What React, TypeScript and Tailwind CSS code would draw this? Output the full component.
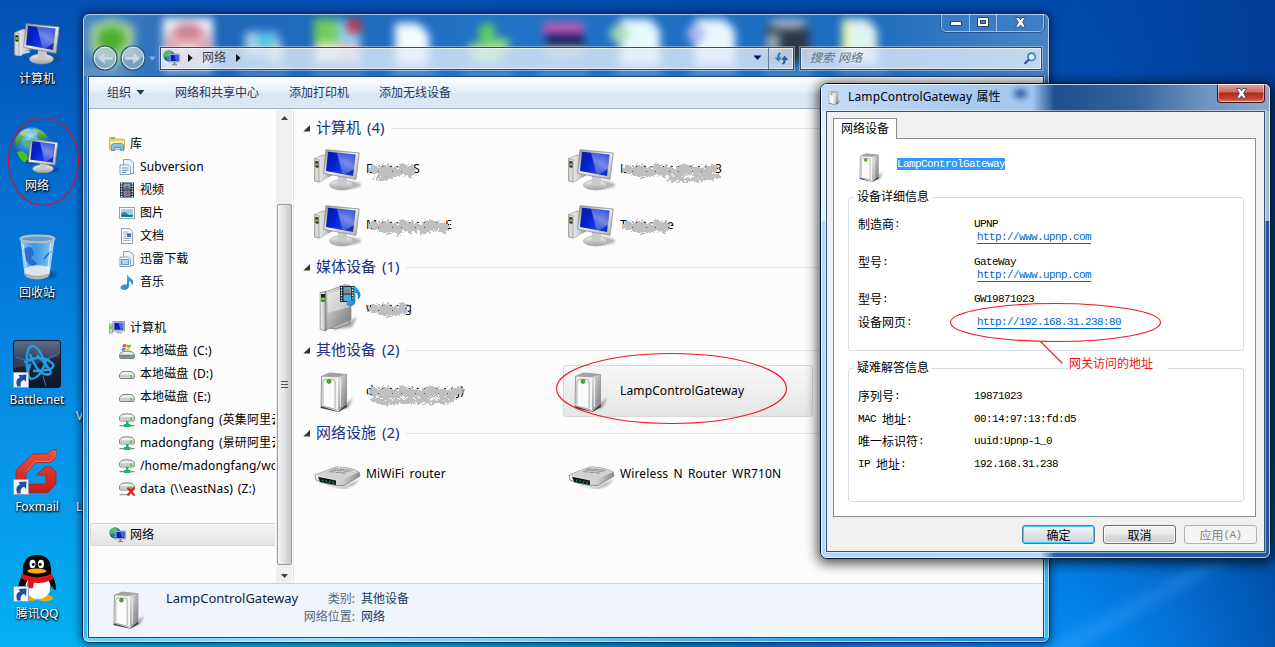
import React from "react";

const UI = "font-['Noto_Sans','Noto_Sans_CJK_SC',sans-serif]";

type IconProps = { className?: string };

/* ---------- shared gradients ---------- */

function Defs() {
  return (
    <svg className="absolute h-0 w-0" aria-hidden="true">
      <defs>
        <linearGradient id="screen" x1="0" y1="0" x2="1" y2="0.5">
          <stop offset="0" stopColor="#0a1c96" />
          <stop offset="0.4" stopColor="#0420d0" />
          <stop offset="0.75" stopColor="#1c3ee0" />
          <stop offset="1" stopColor="#1430bc" />
        </linearGradient>
        <linearGradient id="sheen" x1="0.8" y1="0" x2="0.3" y2="1">
          <stop offset="0" stopColor="#fff" stopOpacity="0.12" />
          <stop offset="0.5" stopColor="#fff" stopOpacity="0.4" />
          <stop offset="1" stopColor="#fff" stopOpacity="0.15" />
        </linearGradient>
        <linearGradient id="bezel" x1="0" y1="0" x2="1" y2="1">
          <stop offset="0" stopColor="#8d9193" />
          <stop offset="0.5" stopColor="#f2f2f0" />
          <stop offset="1" stopColor="#a9a9a6" />
        </linearGradient>
        <linearGradient id="metal" x1="0" y1="0" x2="1" y2="0">
          <stop offset="0" stopColor="#f7f7f7" />
          <stop offset="0.6" stopColor="#cfcfcf" />
          <stop offset="1" stopColor="#8e8e8e" />
        </linearGradient>
        <linearGradient id="metalV" x1="0" y1="0" x2="0" y2="1">
          <stop offset="0" stopColor="#f4f4f4" />
          <stop offset="1" stopColor="#9f9f9f" />
        </linearGradient>
        <linearGradient id="boxSide" x1="0" y1="0" x2="1" y2="1">
          <stop offset="0" stopColor="#e8e8e8" />
          <stop offset="1" stopColor="#777" />
        </linearGradient>
        <radialGradient id="globe" cx="0.45" cy="0.3" r="0.75">
          <stop offset="0" stopColor="#8adcf8" />
          <stop offset="0.45" stopColor="#2488d0" />
          <stop offset="1" stopColor="#0b2a7c" />
        </radialGradient>
        <linearGradient id="land" x1="0" y1="0" x2="0" y2="1">
          <stop offset="0" stopColor="#9ccc6c" />
          <stop offset="1" stopColor="#2a8a2a" />
        </linearGradient>
        <linearGradient id="note" x1="0" y1="0" x2="1" y2="1">
          <stop offset="0" stopColor="#5cc4f2" />
          <stop offset="1" stopColor="#0d6fc0" />
        </linearGradient>
        <linearGradient id="foxred" x1="0" y1="0" x2="0" y2="1">
          <stop offset="0" stopColor="#f0503c" />
          <stop offset="1" stopColor="#c81a18" />
        </linearGradient>
        <linearGradient id="bnet" x1="0" y1="0" x2="0" y2="1">
          <stop offset="0" stopColor="#52627c" />
          <stop offset="0.45" stopColor="#1d2438" />
          <stop offset="1" stopColor="#0f1526" />
        </linearGradient>
        <linearGradient id="bin" x1="0" y1="0" x2="1" y2="0">
          <stop offset="0" stopColor="#bfe4fb" stopOpacity="0.75" />
          <stop offset="0.4" stopColor="#5aaeee" stopOpacity="0.6" />
          <stop offset="1" stopColor="#c8e8fb" stopOpacity="0.7" />
        </linearGradient>
        <filter id="soft" x="-30%" y="-30%" width="160%" height="160%">
          <feGaussianBlur stdDeviation="1.3" />
        </filter>
        <filter id="rough" x="-10%" y="-20%" width="120%" height="140%">
          <feTurbulence type="fractalNoise" baseFrequency="0.35" numOctaves="2" seed="4" result="n" />
          <feDisplacementMap in="SourceGraphic" in2="n" scale="8" xChannelSelector="R" yChannelSelector="G" />
        </filter>
      </defs>
    </svg>
  );
}

/* ---------- large icons ---------- */

function ComputerIcon({ className = "" }: IconProps) {
  return (
    <svg className={className} width="48" height="44" viewBox="0 0 48 44">
      <ellipse cx="33" cy="36" rx="14" ry="4" fill="#333" opacity="0.35" filter="url(#soft)" />
      <path d="M0.7 9.5 L9 6 L18 8 V26 L6 33 L0.7 32 Z" fill="url(#metal)" stroke="#888" strokeWidth="0.6" />
      <path d="M0.7 9.5 L5 10.5 V33 L0.7 32 Z" fill="#d9d9d9" stroke="#777" strokeWidth="0.5" />
      <path d="M1.4 12 L4.4 12.6 V19 L1.4 18 Z" fill="#222" />
      <rect x="1.7" y="14.3" width="2.3" height="2.4" fill="#63e212" />
      <path d="M6 33 L14 28 L17 29 L6 32 Z" fill="#e8e8e8" />
      <ellipse cx="27.5" cy="36" rx="12" ry="5" fill="url(#metalV)" stroke="#a4a4a4" strokeWidth="0.6" />
      <path d="M24 27 L33 28 L32.5 35.5 Q28 37.5 23.5 35 Z" fill="#c9c9c9" />
      <path d="M12 0.7 L45.2 4 L42 30.3 L9.6 24.3 Z" fill="url(#bezel)" stroke="#8b8b88" strokeWidth="0.8" />
      <path d="M14 2.8 L41.6 5.6 L39 27 L12 22 Z" fill="url(#screen)" />
      <path d="M23 3.7 L41.6 5.6 L39.8 20 Q35 23 31 25.5 L28.5 25 Z" fill="url(#sheen)" />
    </svg>
  );
}

function NetworkIcon({ className = "" }: IconProps) {
  return (
    <svg className={className} width="48" height="48" viewBox="0 0 48 48">
      <circle cx="19" cy="19.6" r="18.3" fill="url(#globe)" />
      <path d="M6 8 Q11 3 17 2.5 L16 5 L12 7 L13 10 L9 13 L7 18 L4 21 Q2 16 3 12 Z" fill="url(#land)" />
      <path d="M20 2 Q32 4 35.5 13 L31 12 L28 14 L24 11 L25 7 L21 6 Z" fill="url(#land)" />
      <path d="M4 26 L9 25 L14 28 L15 33 L12 36.5 Q6 34 4 26 Z" fill="#3fc41f" />
      <path d="M12 15 L17 14 L18 18 L14 21 Z" fill="#5ab648" />
      <ellipse cx="16" cy="7" rx="9" ry="4" fill="#fff" opacity="0.3" />
      <ellipse cx="33" cy="43.5" rx="13" ry="3" fill="#002" opacity="0.35" filter="url(#soft)" />
      <ellipse cx="30" cy="42.8" rx="10.5" ry="4" fill="url(#metalV)" stroke="#a4a4a4" strokeWidth="0.5" />
      <path d="M27 36 H34 V42 Q30 44 27 42 Z" fill="#c9c9c9" />
      <path d="M17.7 13 L44.7 16.7 L42 39 L15.3 36 Z" fill="url(#bezel)" stroke="#8b8b88" strokeWidth="0.7" />
      <path d="M19.4 15.2 L42 18 L39.8 36.5 L17.4 33.8 Z" fill="url(#screen)" />
      <path d="M27 16.2 L42 18 L40.4 31 L33 35.6 L31.500 35.500 Z" fill="url(#sheen)" />
    </svg>
  );
}

function BinIcon({ className = "" }: IconProps) {
  return (
    <svg className={className} width="48" height="48" viewBox="0 0 48 48">
      <ellipse cx="32" cy="42" rx="12" ry="4" fill="#024" opacity="0.4" filter="url(#soft)" />
      <path d="M8 6 L12 42 Q24 48 36 42 L41 6 Z" fill="url(#bin)" stroke="#d5ecf8" strokeWidth="0.8" />
      <path d="M10 17 Q14 12 19 15 L21 21 L18 25 L24 30 Q22 34 17 32 L13 28 Z" fill="#1c58c8" opacity="0.75" />
      <path d="M38 18 L31 26" stroke="#1c6cc8" strokeWidth="1.5" />
      <path d="M12 35 Q22 30 37 34 L36 42 Q24 48 12.5 42 Z" fill="#e6eaec" opacity="0.92" />
      <path d="M12.5 41 Q24 46 36 41 L35.5 44 Q24 49 13 44 Z" fill="#b8b8b4" stroke="#777" strokeWidth="0.5" />
      <ellipse cx="24.5" cy="5.8" rx="17" ry="3.4" fill="#5aa0dd" stroke="#bdbdb8" strokeWidth="2" />
      <path d="M10 11 L13 34" stroke="#fff" strokeWidth="1.4" opacity="0.6" />
      <path d="M38 10 L35 36" stroke="#fff" strokeWidth="1.6" opacity="0.6" />
    </svg>
  );
}

function Shortcut() {
  return (
    <g>
      <rect x="0.5" y="32.5" width="15" height="15" fill="#f3f5f8" stroke="#8ea0b8" />
      <path d="M4.2 46.500 Q1.500 39.500 7 37.500 L5.500 35 L13.500 34.500 L13 42 L11 39.800 Q6.500 41.500 7.800 46.500 Z" fill="#1f4f9c" />
    </g>
  );
}

function BattleNetIcon({ className = "" }: IconProps) {
  return (
    <svg className={className} width="48" height="48" viewBox="0 0 48 48">
      <rect x="0.5" y="0.5" width="47" height="47" rx="2.5" fill="url(#bnet)" stroke="#11182a" />
      <path d="M1 1 H47 V14 Q24 26 1 28 Z" fill="#7d93b4" opacity="0.25" />
      <g fill="none" stroke="#1f9fe6" strokeWidth="2.4">
        <path d="M15 36 Q11 8 19 6 Q26 5 34 28" />
        <path d="M11 22 Q30 13 40 24 Q43 31 20 31" />
        <path d="M17 14 Q26 38 37 34 Q41 32 24 15" />
        <path d="M33 20 Q28 38 18 39 Q13 36 17 24" />
      </g>
      <path d="M3 17 L18 22 M44 15 L34 19 M30 36 L33 46" stroke="#2482c4" strokeWidth="1" />
      <Shortcut />
    </svg>
  );
}

function FoxmailIcon({ className = "" }: IconProps) {
  return (
    <svg className={className} width="48" height="48" viewBox="0 0 48 48">
      <path
        d="M43 2.500 V10.500 L37 15.500 H23 L13 26 V37 H33 V28 H23.500 L32 20 H38 L43 25 V37 L35 45.500 H10 L3 38 V23 L20 7 L35 6.800 L39 2.500 Z"
        fill="url(#foxred)"
        stroke="#a81414"
        strokeWidth="0.6"
      />
      <path d="M42 4 V10 L36.500 14.500 H22.500 L12 25.500" fill="none" stroke="#ff8a70" strokeWidth="0.7" />
      <Shortcut />
    </svg>
  );
}

function QQIcon({ className = "" }: IconProps) {
  return (
    <svg className={className} width="48" height="48" viewBox="0 0 48 48">
      <path d="M10 21 Q4 29 6 36 Q8 37 10 33 Q12 42 24 45 Q36 42 39 32 Q42 38 43 35 Q43 27 38 20 Z" fill="#080808" />
      <ellipse cx="16" cy="44" rx="9" ry="3.2" fill="#f7a800" />
      <ellipse cx="32" cy="44" rx="8" ry="3.2" fill="#f7a800" />
      <ellipse cx="25" cy="33" rx="12.5" ry="12" fill="#fff" />
      <path d="M10 21 Q8 1 24 1 Q40 1 38 21 Q24 29 10 21 Z" fill="#080808" />
      <path d="M9 19.5 Q24 27 39 19.5 L40 25 Q30 30.5 21 28.5 L20 34 Q16 35 14 33 L15 27 Q10 26 8 24 Z" fill="#e3121a" />
      <ellipse cx="19.5" cy="10" rx="3" ry="4.2" fill="#fff" />
      <ellipse cx="28" cy="10" rx="3" ry="4.2" fill="#fff" />
      <circle cx="20.3" cy="10.5" r="1.4" fill="#000" />
      <circle cx="27.2" cy="10.5" r="1.4" fill="#000" />
      <ellipse cx="23.8" cy="17" rx="9.5" ry="2.6" fill="#f9b000" />
      <Shortcut />
    </svg>
  );
}

function ServerIcon({ className = "", w = 34, h = 40 }: IconProps & { w?: number; h?: number }) {
  return (
    <svg className={className} width={w} height={h} viewBox="0 0 34 40">
      <path d="M18 38 L33 26 L28 36 Z" fill="#444" opacity="0.5" filter="url(#soft)" />
      <path d="M0.8 34 L18 39.5 L26.5 32 L27 35 L18.5 40 L0.5 36 Z" fill="#3f3f3f" />
      <path d="M1.6 4.4 L9.5 1 L26.5 2.6 V32 L17.5 38 L1 33.8 Z" fill="#ededed" stroke="#808080" strokeWidth="0.8" />
      <path d="M17.6 5.2 L26.5 2.6 V32 L17.5 38 Z" fill="url(#boxSide)" />
      <path d="M1.6 4.4 L9.5 1 L26.5 2.6 L17.6 5.2 Z" fill="#a2a2a2" />
      <path d="M3 33 V10 Q3 7.5 6 7.5 H12 Q15 7.5 15 10 V36" fill="#fbfbfb" stroke="#9a9a9a" strokeWidth="0.8" />
      <circle cx="9" cy="9.6" r="2" fill="#49b618" stroke="#2b6e12" strokeWidth="0.6" />
      <path d="M17.3 5.5 V38" stroke="#fff" strokeWidth="1" />
      <path d="M20.5 7 V35" stroke="#fff" strokeWidth="1.1" opacity="0.7" />
    </svg>
  );
}

function MediaDeviceIcon({ className = "" }: IconProps) {
  return (
    <svg className={className} width="44" height="50" viewBox="0 0 44 50">
      <path d="M14 47 L38 34 L33 44 Z" fill="#444" opacity="0.45" filter="url(#soft)" />
      <path d="M10 45 L31 36 L30 41 L16 46 Z" fill="#bbb" stroke="#666" strokeWidth="0.7" />
      <path d="M6 9 L26 1.5 L32 3 V37 L7 47 Z" fill="url(#boxSide)" stroke="#8e8e8e" strokeWidth="0.7" />
      <path d="M9 11 L30 3.5 V24 L9 30 Z" fill="#f4f4f4" opacity="0.5" />
      <path d="M1.2 9.5 L7 8.5 V48 L1.2 46.5 Z" fill="url(#metal)" stroke="#777" strokeWidth="0.7" />
      <rect x="2" y="11" width="4.2" height="7.5" fill="#222" />
      <rect x="2" y="14.5" width="4.4" height="3" fill="#63d914" />
      <rect x="21" y="3" width="14" height="16" fill="#20282e" />
      <path d="M22.5 4 V18 M33.5 4 V18" stroke="#f6f6f6" strokeWidth="1.3" strokeDasharray="1.3 1.3" />
      <rect x="24.5" y="4" width="7.5" height="6.5" fill="#58a8d6" />
      <rect x="24.5" y="11.5" width="7.5" height="6.5" fill="#58a8d6" />
      <circle cx="28" cy="8" r="2" fill="#e6622c" />
      <path d="M35 2 Q41.5 8 41.5 12 Q41 16 38.5 16 Q40 11 36.4 9.5 V19 Q36 22.5 31.5 23 Q27 23 27.4 20 Q28 16.8 34 17 Z" fill="url(#note)" />
    </svg>
  );
}

function RouterIcon({ className = "" }: IconProps) {
  return (
    <svg className={className} width="48" height="24" viewBox="0 0 48 24">
      <path d="M10 20 L30 22 L46 14 L40 20 L30 24 Z" fill="#555" opacity="0.5" filter="url(#soft)" />
      <path d="M1 10 L22 2 Q36 2 45 7 L46 11 L30 20.5 Q14 21 2 15 Z" fill="url(#metal)" stroke="#777" strokeWidth="0.8" />
      <path d="M1 10 L22 2 Q36 2 45 7 L29 14.6 Q14 14 1 10 Z" fill="#d2d2d2" />
      <path d="M17 5 L36 6.5 M19.5 3.8 L38 5.2 M15 6.6 L33 8.2" stroke="#858585" strokeWidth="0.9" strokeDasharray="5 1" />
      <path d="M4 11.8 L22 15.4 V20 L6 17 Z" fill="#111a22" />
      <path d="M8 15.3 L9.3 15.6 M11.5 16 L12.8 16.3 M15 16.7 L16.3 17 M18.5 17.4 L19.8 17.7" stroke="#209a40" strokeWidth="1.6" />
    </svg>
  );
}

/* ---------- 16px icons ---------- */

function LibraryIcon() {
  return (
    <svg width="16" height="16" viewBox="0 0 16 16">
      <path d="M0.5 3 Q0.5 1.5 2 1.5 H6 L7 3 H14.5 Q15.5 3 15.5 4 V13.5 H0.5 Z" fill="#f3d678" stroke="#c9a13a" strokeWidth="0.8" />
      <path d="M0.8 5.5 H15.2 V8 H0.8 Z" fill="#fdf0b4" />
      <path d="M2 1.5 H5.5 V3.5 H2 Z" fill="#7cc34a" />
      <path d="M2.5 14.5 V10 Q3 7.5 5 7.5 H12 Q14 7.5 14.5 10 V14.5 H11.5 V11.5 H5.5 V14.5 Z" fill="#7cc2ea" stroke="#3a8ec4" strokeWidth="0.8" />
    </svg>
  );
}

function PagesIcon({ blue = false }: { blue?: boolean }) {
  return (
    <svg width="16" height="16" viewBox="0 0 16 16">
      <path d="M4.500 0.500 H10.500 L14.500 3.500 V14.500 H4.500 Z" fill="#eaf2fa" stroke="#7f97b4" strokeWidth="0.9" />
      <path d="M1 6 H9.500 L11.500 8 V15.500 H1 Z" fill="#f8fbff" stroke="#7f97b4" strokeWidth="0.9" />
      {blue ? (
        <rect x="2.6" y="8.5" width="7" height="5.2" fill="#aed8f4" stroke="#4b93c9" strokeWidth="0.9" />
      ) : (
        <path d="M2.8 9 H9.6 M2.8 11.2 H9.6 M2.8 13.4 H7" stroke="#6c86b6" strokeWidth="1.1" />
      )}
    </svg>
  );
}

function VideoIcon() {
  return (
    <svg width="16" height="16" viewBox="0 0 16 16">
      <rect x="1" y="0.5" width="14" height="15" fill="#2b3438" />
      <path d="M2.6 1 V15 M13.4 1 V15" stroke="#eef2f2" strokeWidth="1.3" strokeDasharray="1.4 1.2" />
      <rect x="4.5" y="1.5" width="7" height="6" fill="#5aa8d8" />
      <rect x="4.5" y="8.5" width="7" height="6" fill="#3c9ae0" />
      <path d="M5 7 L8 3.5 L11 7 Z" fill="#b8482c" />
      <circle cx="8.4" cy="11.4" r="1.8" fill="#d2542e" />
    </svg>
  );
}

function PictureIcon() {
  return (
    <svg width="16" height="16" viewBox="0 0 16 16">
      <rect x="0.5" y="2.5" width="15" height="11" fill="#fff" stroke="#8d98a2" strokeWidth="0.9" />
      <rect x="2.2" y="4.2" width="11.6" height="7.6" fill="#8ed0f0" />
      <path d="M2.2 8.6 Q5 5.8 8 8.6 T13.8 9.4 V11.8 H2.2 Z" fill="#2d8f7c" />
      <path d="M2.2 10 H13.8 V11.8 H2.2 Z" fill="#1c68a6" />
    </svg>
  );
}

function DocumentIcon() {
  return (
    <svg width="16" height="16" viewBox="0 0 16 16">
      <path d="M2.5 0.5 H10.5 L13.5 3.5 V15.5 H2.5 Z" fill="#fdfdfd" stroke="#85909c" strokeWidth="0.9" />
      <path d="M4.3 4 H9 M4.3 6 H8 M4.3 8.2 H7 M4.3 10.4 H11.6 M4.3 12.6 H11.6" stroke="#8fa2b8" strokeWidth="0.9" />
      <rect x="8" y="5.3" width="4" height="3.7" fill="#3470c4" />
    </svg>
  );
}

function MusicIcon() {
  return (
    <svg width="16" height="16" viewBox="0 0 16 16">
      <path d="M8 0.3 Q9.5 3.5 13 5.5 Q15.500 8 12.7 11.4 Q13 7.6 10 7 V12.4 Q9 15.8 5 16 Q1 15.4 1.6 12.6 Q3.2 10 8 10.4 Z" fill="url(#note)" />
    </svg>
  );
}

function SmallPcIcon() {
  return (
    <svg width="16" height="16" viewBox="0 0 16 16">
      <rect x="0.5" y="4" width="3" height="9" fill="#d0d4d8" stroke="#84898e" strokeWidth="0.7" />
      <rect x="1.2" y="6" width="1.5" height="3" fill="#4fc423" />
      <rect x="4" y="1.5" width="11.5" height="9.5" fill="#d9dcdd" stroke="#8a8f94" strokeWidth="0.8" />
      <rect x="5.3" y="2.8" width="9" height="7" fill="#0c20b8" />
      <path d="M9.500 2.800 H14.300 V8 L11.500 9.800 Z" fill="#4a70f0" />
      <path d="M8 11 H12 L13 13.5 H7 Z" fill="#b4b8ba" />
    </svg>
  );
}

function SmallNetworkIcon() {
  return (
    <svg width="17" height="16" viewBox="0 0 17 16">
      <circle cx="6" cy="5.8" r="5.6" fill="url(#globe)" />
      <path d="M2 2.5 Q5 0 7.5 1 L6 4 L3 6 L1 8 Q0 5 2 2.5 Z" fill="#5cc03a" />
      <path d="M3 8.5 L6 9 L5.5 11 Z" fill="#3fc41f" />
      <rect x="6.600" y="4" width="9.800" height="8" fill="#e4e7ea" stroke="#7c8288" strokeWidth="0.6" />
      <rect x="7.400" y="4.800" width="8.200" height="6.400" fill="#0c20b4" />
      <path d="M11.200 4.800 H15.600 V9 L13 11.200 Z" fill="#3c60ec" />
      <path d="M10.500 12 H12.500 V14 H14 V15.200 H9 V14 H10.500 Z" fill="#888e94" />
    </svg>
  );
}

function DriveIcon({ kind = "plain" }: { kind?: "plain" | "windows" | "net" | "off" }) {
  const y = kind === "plain" ? 5 : kind === "windows" ? 8 : 1.5;
  return (
    <svg width="16" height="16" viewBox="0 0 16 16">
      <g transform={`translate(0 ${y})`}>
        <path d="M0.6 3.4 L3 0.8 Q8 -0.2 13 0.8 L15.4 3.4 V6.6 Q15.4 7.5 14 7.5 H2 Q0.6 7.5 0.6 6.6 Z" fill="#f0f0f0" stroke="#6f7478" strokeWidth="0.9" />
        <path d="M1.1 3.7 H14.9 V6.8 H1.1 Z" fill={kind === "windows" ? "#6f8a94" : "#c9ccce"} />
        <rect x="11.2" y="4" width="2" height="2.6" fill="#4bd01c" />
      </g>
      {kind === "windows" && (
        <g>
          <path d="M4 1.5 Q6 0.4 7.5 1.3 L6.8 4.2 Q5 3.5 3.2 4.5 Z" fill="#e8552b" />
          <path d="M8.2 1.6 Q10 2.5 12 1.6 L11.3 4.4 Q9.4 5.3 7.5 4.4 Z" fill="#79b93a" />
          <path d="M3 5.2 Q5 4.2 6.6 5 L5.9 7.8 Q4 7 2.3 8 Z" fill="#3a86d8" />
          <path d="M7.3 5.3 Q9 6 11 5.2 L10.3 8 Q8.4 8.8 6.6 8 Z" fill="#f6c32c" />
        </g>
      )}
      {kind === "net" && (
        <g>
          <path d="M7 9 H9.5 V12 H7 Z M5 12 H11.5 V15 H5 Z" fill="#18b573" />
          <path d="M0.5 13.6 H5 M11.5 13.6 H15.5" stroke="#7e8488" strokeWidth="1.4" />
        </g>
      )}
      {kind === "off" && (
        <g>
          <path d="M0.5 13.6 H8" stroke="#9aa0a4" strokeWidth="1.4" />
          <path d="M8.5 6.5 L15.5 14.5 M15.5 6.5 L8.5 14.5" stroke="#dd1c1c" strokeWidth="2.2" />
        </g>
      )}
    </svg>
  );
}

/* ---------- desktop ---------- */

const desktopItems = [
  { label: "计算机", icon: <ComputerIcon className="mt-[4px] ml-px" /> },
  { label: "网络", icon: <NetworkIcon /> },
  { label: "回收站", icon: <BinIcon /> },
  { label: "Battle.net", icon: <BattleNetIcon /> },
  { label: "Foxmail", icon: <FoxmailIcon /> },
  { label: "腾讯QQ", icon: <QQIcon /> },
];

function Desktop() {
  return (
    <div className="flex w-[74px] flex-col pt-[19px]">
      {desktopItems.map((item) => (
        <div key={item.label} className="flex h-[107px] flex-col items-center">
          <div className="h-12 w-12">{item.icon}</div>
          <div className="mt-[5px] text-xs leading-[14px] whitespace-nowrap text-white [text-shadow:1px_1px_2px_#000,0_1px_2px_#000]">
            {item.label}
          </div>
        </div>
      ))}
    </div>
  );
}

function Wallpaper() {
  return (
    <svg className="absolute inset-0" width="1275" height="647" viewBox="0 0 1275 647">
      <defs>
        <linearGradient id="sky" x1="0" y1="0" x2="0" y2="1">
          <stop offset="0" stopColor="#0450b4" />
          <stop offset="0.35" stopColor="#0474d6" />
          <stop offset="0.7" stopColor="#0794e8" />
          <stop offset="1" stopColor="#04b0f2" />
        </linearGradient>
        <linearGradient id="night" x1="0" y1="0" x2="1" y2="0">
          <stop offset="0.3" stopColor="#003c9c" stopOpacity="0" />
          <stop offset="0.85" stopColor="#0048a8" stopOpacity="0.75" />
          <stop offset="1" stopColor="#003c94" stopOpacity="0.95" />
        </linearGradient>
        <radialGradient id="glow" gradientUnits="userSpaceOnUse" cx="990" cy="740" r="400">
          <stop offset="0" stopColor="#10a0ff" />
          <stop offset="0.4" stopColor="#0484ec" stopOpacity="0.95" />
          <stop offset="1" stopColor="#0468d0" stopOpacity="0" />
        </radialGradient>
        <filter id="ray" x="-20%" y="-20%" width="140%" height="140%">
          <feGaussianBlur stdDeviation="6" />
        </filter>
      </defs>
      <rect width="1275" height="647" fill="url(#sky)" />
      <rect width="1275" height="647" fill="url(#night)" />
      <rect width="1275" height="647" fill="url(#glow)" />
      <path d="M1040 650 L1200 565 L1230 560 L1110 630 L1070 655 Z" fill="#4aa8f8" opacity="0.3" filter="url(#ray)" />
    </svg>
  );
}

/* ---------- explorer window ---------- */

function GlassShapes() {
  return (
    <svg className="absolute top-0 left-0" width="966" height="62" viewBox="83 14 966 62">
      <defs>
        <filter id="glass" x="-5%" y="-30%" width="110%" height="160%" colorInterpolationFilters="sRGB">
          <feGaussianBlur stdDeviation="4" />
        </filter>
      </defs>
      <g filter="url(#glass)">
        <path d="M90 26 L112 18 L134 26 V48 L112 70 L90 52 Z" fill="#a5cf9d" />
        <path d="M98 32 L112 26 L125 32 V44 L112 56 L98 46 Z" fill="#4cb02c" />
        <rect x="163" y="18" width="50" height="50" fill="#f3f6fb" />
        <circle cx="188" cy="44" r="21" fill="#cf8090" />
        <path d="M174 36 L182 56 L188 42 L194 56 L202 36" fill="none" stroke="#f6e6ea" strokeWidth="5" />
        <path d="M245 32 H276 L282 46 V62 H268 V56 H245 Z" fill="#a9cfe8" />
        <circle cx="266" cy="41" r="9" fill="#4fc4e2" />
        <rect x="268" y="48" width="13" height="14" fill="#d8dcb8" />
        <rect x="314" y="19" width="24" height="24" fill="#74cc60" />
        <rect x="338" y="21" width="22" height="22" fill="#8ad0f6" />
        <circle cx="354" cy="26" r="8" fill="#c43848" />
        <rect x="315" y="43" width="23" height="20" fill="#f4e6c4" />
        <rect x="338" y="43" width="22" height="20" fill="#eabdc2" />
        <path d="M395 23 H418 L429 34 V66 H395 Z" fill="#f4faff" />
        <circle cx="487" cy="32" r="9" fill="#5fcc62" />
        <path d="M468 44 L506 38 L510 44 L498 62 H474 Z" fill="#90e080" />
        <rect x="543" y="22" width="41" height="13" fill="#b85ab0" />
        <rect x="546" y="34" width="38" height="13" fill="#141c64" />
        <rect x="545" y="46" width="38" height="10" fill="#8fb4a8" />
        <path d="M620 19 H650 L660 30 V66 H620 Z" fill="#e6f9fb" />
        <circle cx="619" cy="34" r="9" fill="#a8d8b4" />
        <path d="M695 19 H724 L735 30 V66 H695 Z" fill="#ecf6ff" />
        <circle cx="696" cy="34" r="9" fill="#b0b8f0" />
        <rect x="766" y="22" width="43" height="40" rx="6" fill="#2c3848" />
        <ellipse cx="788" cy="24" rx="20" ry="5" fill="#a9b6c2" />
        <rect x="767" y="34" width="12" height="18" fill="#9fb0bd" />
        <path d="M842 19 H867 L877 30 V64 H842 Z" fill="#dff4ef" />
        <rect x="842" y="20" width="7" height="36" fill="#f2f4a4" />
        {[105, 187, 262, 337, 412, 487, 562, 637, 712, 787, 862].map((x) => (
          <rect key={x} x={x - 24} y="70" width="50" height="6" fill="#9fb8cc" opacity="0.5" />
        ))}
      </g>
    </svg>
  );
}

function CaptionButtons() {
  return (
    <div className="mr-[5px] flex h-[18px] rounded-b-[5px] border border-t-0 border-[#9fc0e6] bg-[#3b7cc4]/60 outline outline-[#16406f]/60">
      <div className="flex w-[28px] items-center justify-center border-r border-[#9fc0e6]">
        <svg className="mt-[2px]" width="12" height="6" viewBox="0 0 12 6">
          <rect x="0.5" y="0.5" width="11" height="4" fill="#fff" stroke="#3a4658" />
        </svg>
      </div>
      <div className="flex w-[27px] items-center justify-center border-r border-[#9fc0e6]">
        <svg width="12" height="11" viewBox="0 0 12 11">
          <rect x="0.5" y="0.5" width="11" height="9" fill="#fff" stroke="#3a4658" />
          <rect x="3.5" y="3.5" width="5" height="3" fill="#4682c4" stroke="#3a4658" />
        </svg>
      </div>
      <div className="flex w-[46px] items-center justify-center">
        <CloseGlyph />
      </div>
    </div>
  );
}

function CloseGlyph() {
  return (
    <svg width="13" height="11" viewBox="0 0 13 11">
      <path d="M1.5 0.500 H5 L6.500 2.800 L8 0.500 H11.500 L8.600 5.300 L11.500 10.200 H8 L6.500 7.800 L5 10.200 H1.500 L4.400 5.300 Z" fill="#fff" stroke="#3a4658" strokeWidth="0.9" />
    </svg>
  );
}

function RoundNav({ flip = false }: { flip?: boolean }) {
  return (
    <svg width="26" height="26" viewBox="0 0 26 26">
      <circle cx="13" cy="13" r="12" fill="#8fb0c8" fillOpacity="0.7" stroke="#33506e" strokeWidth="1.2" />
      <circle cx="13" cy="13" r="10.8" fill="none" stroke="#dcecf8" strokeWidth="1" />
      <path d="M2.5 12 A10.6 10.6 0 0 1 23.5 12 Q13 15 2.5 12 Z" fill="#fff" opacity="0.3" />
      <path
        d={flip ? "M5 11.500 H13 V7 L20.500 13 L13 19 V14.800 H5 Z" : "M21 11.500 H13 V7 L5.500 13 L13 19 V14.800 H21 Z"}
        fill="#c8dae6"
        stroke="#a6bccb"
        strokeWidth="0.6"
      />
    </svg>
  );
}

function Crumb() {
  return (
    <svg width="5" height="8" viewBox="0 0 5 8">
      <path d="M0 0 L4.6 4 L0 8 Z" fill="#111" />
    </svg>
  );
}

function AddressRow() {
  return (
    <div className="relative mt-[14px] flex h-[24px] items-center pl-[9px]">
      <RoundNav />
      <div className="ml-[2px] flex">
        <RoundNav flip />
      </div>
      <svg className="mr-[3px] ml-[2px] mt-[2px]" width="9" height="6" viewBox="0 0 9 6">
        <path d="M1 0.5 H8 L4.5 4.8 Z" fill="#7fb0e2" />
      </svg>
      <div className="flex h-[23px] w-[634px] items-center border border-[#2d4c74] bg-[#e2ebf6]/80 shadow-[inset_0_0_0_1px_rgba(255,255,255,0.6),0_0_0_1px_rgba(255,255,255,0.35)]">
        <div className="flex flex-1 items-center pl-[2px]">
          <SmallNetworkIcon />
          <div className="ml-[8px] flex">
            <Crumb />
          </div>
          <span className="ml-[9px] text-xs leading-none text-[#3a4450]">网络</span>
          <div className="ml-[10px] flex">
            <Crumb />
          </div>
        </div>
        <svg className="mr-[6px]" width="9" height="6" viewBox="0 0 9 6">
          <path d="M0.5 0.5 H8.5 L4.5 5 Z" fill="#0c0c58" />
        </svg>
        <div className="flex h-full w-[25px] items-center justify-center border-l border-[#5e7ea8]">
          <svg width="15" height="13" viewBox="0 0 15 13">
            <path d="M5.5 0.5 Q3.2 1.5 3.2 5.5 H0.6 L4.4 9.5 L7.8 5.5 H5.6 Q5.4 2.5 7 1 Z" fill="#1e7ccc" />
            <path d="M9.5 12.5 Q11.8 11.5 11.8 8 H14.4 L10.6 3.6 L7.2 8 H9.4 Q9.6 10.5 8 12 Z" fill="#2260b4" />
          </svg>
        </div>
      </div>
      <div className="ml-[6px] flex h-[23px] w-[242px] items-center border border-[#2d4c74] bg-[#e2ebf6]/80 pr-[4px] pl-[9px] shadow-[inset_0_0_0_1px_rgba(255,255,255,0.6),0_0_0_1px_rgba(255,255,255,0.35)]">
        <span className="flex-1 text-xs leading-none text-[#68717c] italic [word-spacing:1px]">搜索 网络</span>
        <svg width="14" height="13" viewBox="0 0 14 13">
          <circle cx="8.6" cy="4.8" r="3.7" fill="#e6f4ff" stroke="#2e7dc6" strokeWidth="1.6" />
          <path d="M6 7.5 L1.5 11.8" stroke="#2a4f8e" strokeWidth="2" />
        </svg>
      </div>
    </div>
  );
}

function CommandBar() {
  return (
    <div className="flex h-[32px] shrink-0 items-center border-b border-[#9fb3d0] bg-[linear-gradient(to_bottom,#fdfeff_0%,#e6eefa_50%,#dbe5f4_52%,#dde7f5_100%)] pl-[18px] text-xs leading-none text-[#1e395b]">
      <span>组织</span>
      <svg className="ml-[5px]" width="9" height="5" viewBox="0 0 9 5">
        <path d="M0.5 0 H8.5 L4.5 4.8 Z" fill="#1e395b" />
      </svg>
      <span className="ml-[30px]">网络和共享中心</span>
      <span className="ml-[30px]">添加打印机</span>
      <span className="ml-[30px]">添加无线设备</span>
    </div>
  );
}

type NavEntry = { label: string; icon: React.ReactNode; root?: boolean; active?: boolean };

const navGroups: NavEntry[][] = [
  [
    { label: "库", icon: <LibraryIcon />, root: true },
    { label: "Subversion", icon: <PagesIcon /> },
    { label: "视频", icon: <VideoIcon /> },
    { label: "图片", icon: <PictureIcon /> },
    { label: "文档", icon: <DocumentIcon /> },
    { label: "迅雷下载", icon: <PagesIcon blue /> },
    { label: "音乐", icon: <MusicIcon /> },
  ],
  [
    { label: "计算机", icon: <SmallPcIcon />, root: true },
    { label: "本地磁盘 (C:)", icon: <DriveIcon kind="windows" /> },
    { label: "本地磁盘 (D:)", icon: <DriveIcon /> },
    { label: "本地磁盘 (E:)", icon: <DriveIcon /> },
    { label: "madongfang (英集阿里云", icon: <DriveIcon kind="net" /> },
    { label: "madongfang (景研阿里云", icon: <DriveIcon kind="net" /> },
    { label: "/home/madongfang/wo", icon: <DriveIcon kind="net" /> },
    { label: "data (\\\\eastNas) (Z:)", icon: <DriveIcon kind="off" /> },
  ],
  [{ label: "网络", icon: <SmallNetworkIcon />, root: true, active: true }],
];

function NavRow({ entry }: { entry: NavEntry }) {
  const pad = entry.root ? "pl-[18px]" : "pl-[28px]";
  const tone = entry.active
    ? "rounded-l-[3px] border border-r-0 border-[#d6d6d6] bg-gradient-to-b from-[#f6f6f6] to-[#e3e3e3]"
    : "border border-transparent";
  return (
    <div className={`flex h-[23px] items-center text-xs leading-none whitespace-nowrap text-black ${pad} ${tone}`}>
      <div className="w-[21px] shrink-0">{entry.icon}</div>
      <span className="tracking-[0.12px] [word-spacing:1.500px]">{entry.label}</span>
    </div>
  );
}

function NavPane() {
  return (
    <div className="flex w-[186px] shrink-0 flex-col gap-[23px] overflow-hidden pt-[23px] pl-px">
      {navGroups.map((group, i) => (
        <div key={i}>
          {group.map((entry) => (
            <NavRow key={entry.label} entry={entry} />
          ))}
        </div>
      ))}
    </div>
  );
}

function ScrollBar() {
  return (
    <div className="ml-px flex w-[16px] shrink-0 flex-col items-center bg-[#f0f0f0]">
      <div className="flex h-[17px] items-center">
        <svg width="7" height="4" viewBox="0 0 7 4">
          <path d="M0 4 H7 L3.5 0 Z" fill="#404040" />
        </svg>
      </div>
      <div className="h-[78px]" />
      <div className="flex h-[361px] w-[15px] flex-col items-center justify-center gap-[2px] rounded-[2px] border border-[#9a9a9a] bg-gradient-to-r from-[#f5f5f5] via-[#e2e2e4] to-[#c4c4c8]">
        <div className="h-px w-[7px] bg-[#555]" />
        <div className="h-px w-[7px] bg-[#555]" />
        <div className="h-px w-[7px] bg-[#555]" />
      </div>
      <div className="flex flex-1 items-center pt-[3px]">
        <svg width="7" height="4" viewBox="0 0 7 4">
          <path d="M0 0 H7 L3.5 4 Z" fill="#404040" />
        </svg>
      </div>
    </div>
  );
}

function Scribble({ w, tail, ends }: { w: number; tail?: string; ends: [string, string] }) {
  const bumps = Math.floor((w - 6) / 7);
  const dots = Array.from({ length: bumps }, (_, i) => ({
    cx: 8 + i * 7 + (i % 2),
    cy: 14 + ((i * 5) % 4) - 1.5,
    rx: 5.5,
    ry: 4.5 + ((i * 7) % 3),
  }));
  return (
    <div className="relative h-[24px]">
      <div className="flex h-[24px] items-center justify-between text-xs leading-none" style={{ width: w }}>
        <span>{ends[0]}</span>
        <span>{ends[1]}</span>
      </div>
      <svg className="absolute top-0 left-0" width={w + 6} height="32" viewBox={`0 0 ${w + 6} 32`}>
        <g filter="url(#rough)" shapeRendering="crispEdges">
          {dots.map((d, i) => (
            <ellipse key={i} cx={d.cx} cy={d.cy} rx={d.rx} ry={d.ry} fill="#bfbfbf" />
          ))}
          {tail && <path d={tail} fill="none" stroke="#bfbfbf" strokeWidth="5" strokeLinecap="round" />}
        </g>
        <path d={`M16 9.500 H${w - 12}`} stroke="#30343c" strokeWidth="1" strokeDasharray="1 7 2 5 1 11" />
        <path d={`M12 14.500 H${w - 14}`} stroke="#4c5058" strokeWidth="1" strokeDasharray="1 13 1 8" />
      </svg>
    </div>
  );
}

function Tile({ icon, children, active = false }: { icon: React.ReactNode; children: React.ReactNode; active?: boolean }) {
  const tone = active
    ? "rounded-[3px] border-[#d9d9d9] bg-gradient-to-b from-[#f8f8f8] to-[#e5e5e5]"
    : "border-transparent";
  return (
    <div className={`flex h-[52px] w-[250px] items-center border ${tone}`}>
      <div className="flex w-[56px] shrink-0 items-center pl-[4px]">{icon}</div>
      <div className="text-xs leading-none tracking-[0.13px] whitespace-nowrap text-black [word-spacing:2px]">{children}</div>
    </div>
  );
}

function Section({ title, children }: { title: string; children: React.ReactNode }) {
  return (
    <section>
      <div className="flex h-[30px] items-center pl-[9px]">
        <svg width="7" height="7" viewBox="0 0 7 7">
          <path d="M7 0 V6.5 H0.3 Z" fill="#333" />
        </svg>
        <h2 className="-mt-px ml-[6px] text-[15px] leading-none whitespace-nowrap text-[#1e3287] [word-spacing:2px]">{title}</h2>
        <div className="ml-[7px] h-px flex-1 bg-[#e2e2e2]" />
      </div>
      <div className="grid grid-cols-[250px_250px] gap-x-[4px] gap-y-[4px] pl-[15px]">{children}</div>
    </section>
  );
}

function ContentPane() {
  return (
    <div className="flex flex-1 flex-col gap-px border-l border-[#dfe8f5] bg-[#fcfcfc] pt-[4px]">
      <Section title="计算机 (4)">
        <Tile icon={<ComputerIcon className="mt-[3px]" />}>
          <Scribble w={54} ends={["D", "S"]} tail="M10 21 H20 L28 18" />
        </Tile>
        <Tile icon={<ComputerIcon className="mt-[3px]" />}>
          <Scribble w={102} ends={["L", "3"]} tail="M50 22 H84 L98 19" />
        </Tile>
        <Tile icon={<ComputerIcon className="mt-[3px]" />}>
          <Scribble w={86} ends={["M", "E"]} tail="M32 19 V21" />
        </Tile>
        <Tile icon={<ComputerIcon className="mt-[3px]" />}>
          <Scribble w={54} ends={["T", "e"]} />
        </Tile>
      </Section>
      <Section title="媒体设备 (1)">
        <Tile icon={<MediaDeviceIcon className="ml-[5px]" />}>
          <Scribble w={46} ends={["w", "g"]} />
        </Tile>
      </Section>
      <Section title="其他设备 (2)">
        <Tile icon={<ServerIcon className="mt-px ml-[6px]" />}>
          <Scribble w={98} ends={["d", "g)"]} tail="M8 20 Q20 27 34 22 L84 22" />
        </Tile>
        <Tile active icon={<ServerIcon className="mt-px ml-[6px]" />}>
          LampControlGateway
        </Tile>
      </Section>
      <Section title="网络设施 (2)">
        <Tile icon={<RouterIcon className="mt-[5px]" />}>MiWiFi router</Tile>
        <Tile icon={<RouterIcon className="mt-[5px]" />}>Wireless N Router WR710N</Tile>
      </Section>
    </div>
  );
}

function DetailsPane() {
  return (
    <div className="flex h-[54px] shrink-0 items-start border-t border-[#c4d6ea] bg-[#f0f4fc] text-xs leading-none">
      <ServerIcon className="mt-[7px] ml-[24px]" w={32} h={38} />
      <div className="mt-[8px] ml-[21px] w-[133px] text-[13px] whitespace-nowrap text-[#10213a]">LampControlGateway</div>
      <div className="mt-[9px] ml-[4px] grid grid-cols-[52px_1fr] gap-x-[6px] gap-y-[6px]">
        <span className="text-right whitespace-nowrap text-[#5a6779]">类别:</span>
        <span className="text-[#1e395b]">其他设备</span>
        <span className="text-right whitespace-nowrap text-[#5a6779]">网络位置:</span>
        <span className="text-[#1e395b]">网络</span>
      </div>
    </div>
  );
}

function ExplorerWindow() {
  return (
    <div className="absolute top-[13px] left-[82px] flex h-[630px] w-[968px] flex-col overflow-hidden rounded-[7px] border border-[#0d2c50] bg-[linear-gradient(to_bottom,#2f74c2_0%,#2f7cd0_10%,#2f86d8_35%,#30a0ea_70%,#3cc0f4_100%)] shadow-[0_0_8px_1px_rgba(0,10,40,0.6)]">
      <div className="relative h-[62px] shrink-0">
        <div className="absolute inset-0 bg-[linear-gradient(to_right,#4a86c8_0%,#1f66b8_12%,#2274c8_45%,#1c6cc0_80%,#4a84c4_100%)]" />
        <GlassShapes />
        <div className="relative flex justify-end">
          <CaptionButtons />
        </div>
        <AddressRow />
      </div>
      <div className="mx-[5px] flex h-[562px] flex-col border border-[#1f4a7c] bg-[#fcfcfc] outline outline-white/50">
        <CommandBar />
        <div className="flex flex-1 overflow-hidden">
          <NavPane />
          <ScrollBar />
          <div className="ml-px flex flex-1">
            <ContentPane />
          </div>
        </div>
        <DetailsPane />
      </div>
      <div className="h-[4px] bg-[linear-gradient(to_right,#5fd4f6_0%,#8ce8fb_25%,#6fd0f8_45%,#2fa4f8_75%,#1f8cf0_100%)]" />
      <div className="pointer-events-none absolute inset-0 rounded-[6px] border border-white/60" />
    </div>
  );
}

/* ---------- properties dialog ---------- */

function Fixed({ text, className = "" }: { text: string; className?: string }) {
  const parts = text.split(/([\u4e00-\u9fff]+)/).filter(Boolean);
  return (
    <span className={`inline-flex items-center leading-none whitespace-pre ${className}`}>
      {parts.map((part, i) =>
        /[\u4e00-\u9fff]/.test(part) ? (
          <span key={i} className="font-['Noto_Sans_CJK_SC',sans-serif] text-xs leading-none">
            {part}
          </span>
        ) : (
          <span key={i} className="pt-px font-['Liberation_Mono',monospace] text-[11px] leading-[11px] tracking-[-0.6px]">
            {part}
          </span>
        ),
      )}
    </span>
  );
}

function Link({ text }: { text: string }) {
  return <Fixed text={text} className="mt-[2px] ml-[3px] border-b border-[#0066cc] text-[#0066cc]" />;
}

function Row({ label, children, className = "h-[13px]" }: { label?: string; children: React.ReactNode; className?: string }) {
  return (
    <div className={`flex items-center ${className}`}>
      <div className="flex w-[116px]">{label && <Fixed text={label} />}</div>
      {children}
    </div>
  );
}

function Group({ title, className, children }: { title: string; className: string; children: React.ReactNode }) {
  return (
    <fieldset className={`rounded-[3px] border border-[#d5dfe5] pl-[9px] ${className}`}>
      <legend className="-ml-[4px] h-[14px] px-[3px] text-xs leading-[14px] text-black">{title}</legend>
      {children}
    </fieldset>
  );
}

function PropertiesDialog() {
  return (
    <div className="absolute top-[83px] left-[820px] h-[476px] w-[451px] rounded-[7px] border border-[#0a1a30] bg-[linear-gradient(to_bottom,rgba(255,255,255,0.6),rgba(255,255,255,0.6)),linear-gradient(to_right,#b4d6fa_0%,#b8d8fa_49%,#1f66b0_52%,#1c5a9e_100%)] bg-[length:100%_137px,100%_100%] bg-no-repeat shadow-[0_2px_12px_3px_rgba(0,0,0,0.65)]">
      <div className="pointer-events-none absolute inset-0 rounded-[6px] border border-white/70" />
      <div className="flex h-[27px] items-start rounded-t-[6px] bg-[linear-gradient(to_right,#c4dcf6_0%,#a9cbf2_30%,#a4c8f0_47%,#1f4f8c_52%,#35649c_70%,#7095c0_86%,#8aa8cc_100%)] pl-[7px]">
        <ServerIcon className="mt-[7px]" w={13} h={14} />
        <div className="mt-[7px] ml-[7px] text-xs leading-none tracking-[0.13px] whitespace-nowrap text-black [word-spacing:1px]">
          LampControlGateway 属性
        </div>
        <div className="mt-[5px] ml-[13px] h-[9px] w-[13px] rounded-full bg-[#2f5c9e] blur-[3px]" />
        <div className="mr-[5px] ml-auto flex h-[19px] w-[48px] items-center justify-center rounded-b-[4px] border border-t-0 border-[#4a1418] bg-[linear-gradient(to_bottom,#e3a79b_0%,#cc6a5c_45%,#b02a1c_50%,#c84a34_85%,#e08a70_100%)] shadow-[inset_0_0_0_1px_rgba(255,255,255,0.45)]">
          <CloseGlyph />
        </div>
      </div>
      <div className="mx-[5px] flex h-[441px] flex-col border border-[#33506e] bg-[#f0f0f0] pt-[6px] pl-[6px] outline outline-white/50">
        <div className="relative -mb-px flex h-[21px] w-[64px] items-center justify-center border border-b-0 border-[#898c95] bg-white text-xs leading-none text-black">
          网络设备
        </div>
        <div className="flex h-[379px] w-[423px] flex-col border border-[#898c95] bg-white pl-[14px]">
          <div className="flex h-[51px] items-start">
            <ServerIcon className="mt-[14px] ml-[11px]" w={25} h={29} />
            <div className="mt-[19px] ml-[13px] flex h-[12px] items-center bg-[#3399ff] text-white">
              <Fixed text="LampControlGateway" />
            </div>
          </div>
          <Group title="设备详细信息" className="h-[161px] w-[396px]">
            <div className="pt-[13px]">
              <Row label="制造商:">
                <Fixed text="UPNP" />
              </Row>
              <Row>
                <Link text="http://www.upnp.com" />
              </Row>
              <Row label="型号:" className="mt-[12px] h-[13px]">
                <Fixed text="GateWay" />
              </Row>
              <Row>
                <Link text="http://www.upnp.com" />
              </Row>
              <Row label="型号:" className="mt-[11px] h-[13px]">
                <Fixed text="GW19871023" />
              </Row>
              <Row label="设备网页:" className="mt-[10px] h-[13px]">
                <Link text="http://192.168.31.238:80" />
              </Row>
            </div>
          </Group>
          <Group title="疑难解答信息" className="mt-[10px] h-[141px] w-[396px]">
            <div className="pt-[9px]">
              <Row label="序列号:" className="h-[23px]">
                <Fixed text="19871023" />
              </Row>
              <Row label="MAC 地址:" className="h-[23px]">
                <Fixed text="00:14:97:13:fd:d5" />
              </Row>
              <Row label="唯一标识符:" className="h-[22px]">
                <Fixed text="uuid:Upnp-1_0" />
              </Row>
              <Row label="IP 地址:" className="h-[23px]">
                <Fixed text="192.168.31.238" />
              </Row>
            </div>
          </Group>
        </div>
        <div className="mt-[8px] flex justify-end gap-[8px] pr-[7px]">
          <button className="flex h-[19px] w-[73px] items-center justify-center rounded-[3px] border border-[#3c7fb1] bg-gradient-to-b from-[#f2f4f5] to-[#cbd5da] text-black shadow-[inset_0_0_0_1px_#3fd0f8]">
            <Fixed text="确定" />
          </button>
          <button className="flex h-[19px] w-[73px] items-center justify-center rounded-[3px] border border-[#707070] bg-[linear-gradient(to_bottom,#f2f2f2_0%,#ebebeb_48%,#dddddd_52%,#cfcfcf_100%)] text-black shadow-[inset_0_0_0_1px_#fafafa]">
            <Fixed text="取消" />
          </button>
          <button className="flex h-[19px] w-[73px] items-center justify-center rounded-[3px] border border-[#adb2b5] bg-[#f4f4f4] text-[#838383]">
            <Fixed text="应用(A)" />
          </button>
        </div>
      </div>
    </div>
  );
}

/* ---------- red markup ---------- */

function Annotations() {
  return (
    <>
      <svg className="pointer-events-none absolute inset-0" width="1275" height="647" viewBox="0 0 1275 647">
        <g fill="none" stroke="#f01820" strokeWidth="1.1">
          <ellipse cx="43.5" cy="161.5" rx="35" ry="44" stroke="#d01030" />
          <ellipse cx="671.5" cy="388.5" rx="115" ry="35" />
          <ellipse cx="1055.5" cy="322.5" rx="105" ry="19" />
          <path d="M1040.5 341.5 L1062.5 363.5" stroke="#f01820" />
        </g>
      </svg>
      <div className="absolute top-[357px] left-[1068px] h-[14px] w-[100px] bg-white pl-px text-xs leading-[14px] whitespace-nowrap text-[#f01018]">
        网关访问的地址
      </div>
    </>
  );
}

export default function App() {
  return (
    <div className={`relative h-[647px] w-[1275px] overflow-hidden ${UI}`}>
      <Defs />
      <Wallpaper />
      <div className="relative">
        <Desktop />
      </div>
      <div className="absolute top-[409px] left-[76px] text-xs leading-[14px] text-white [text-shadow:1px_1px_2px_#000]">V</div>
      <div className="absolute top-[500px] left-[76px] text-xs leading-[14px] text-white [text-shadow:1px_1px_2px_#000]">L</div>
      <ExplorerWindow />
      <PropertiesDialog />
      <Annotations />
    </div>
  );
}
